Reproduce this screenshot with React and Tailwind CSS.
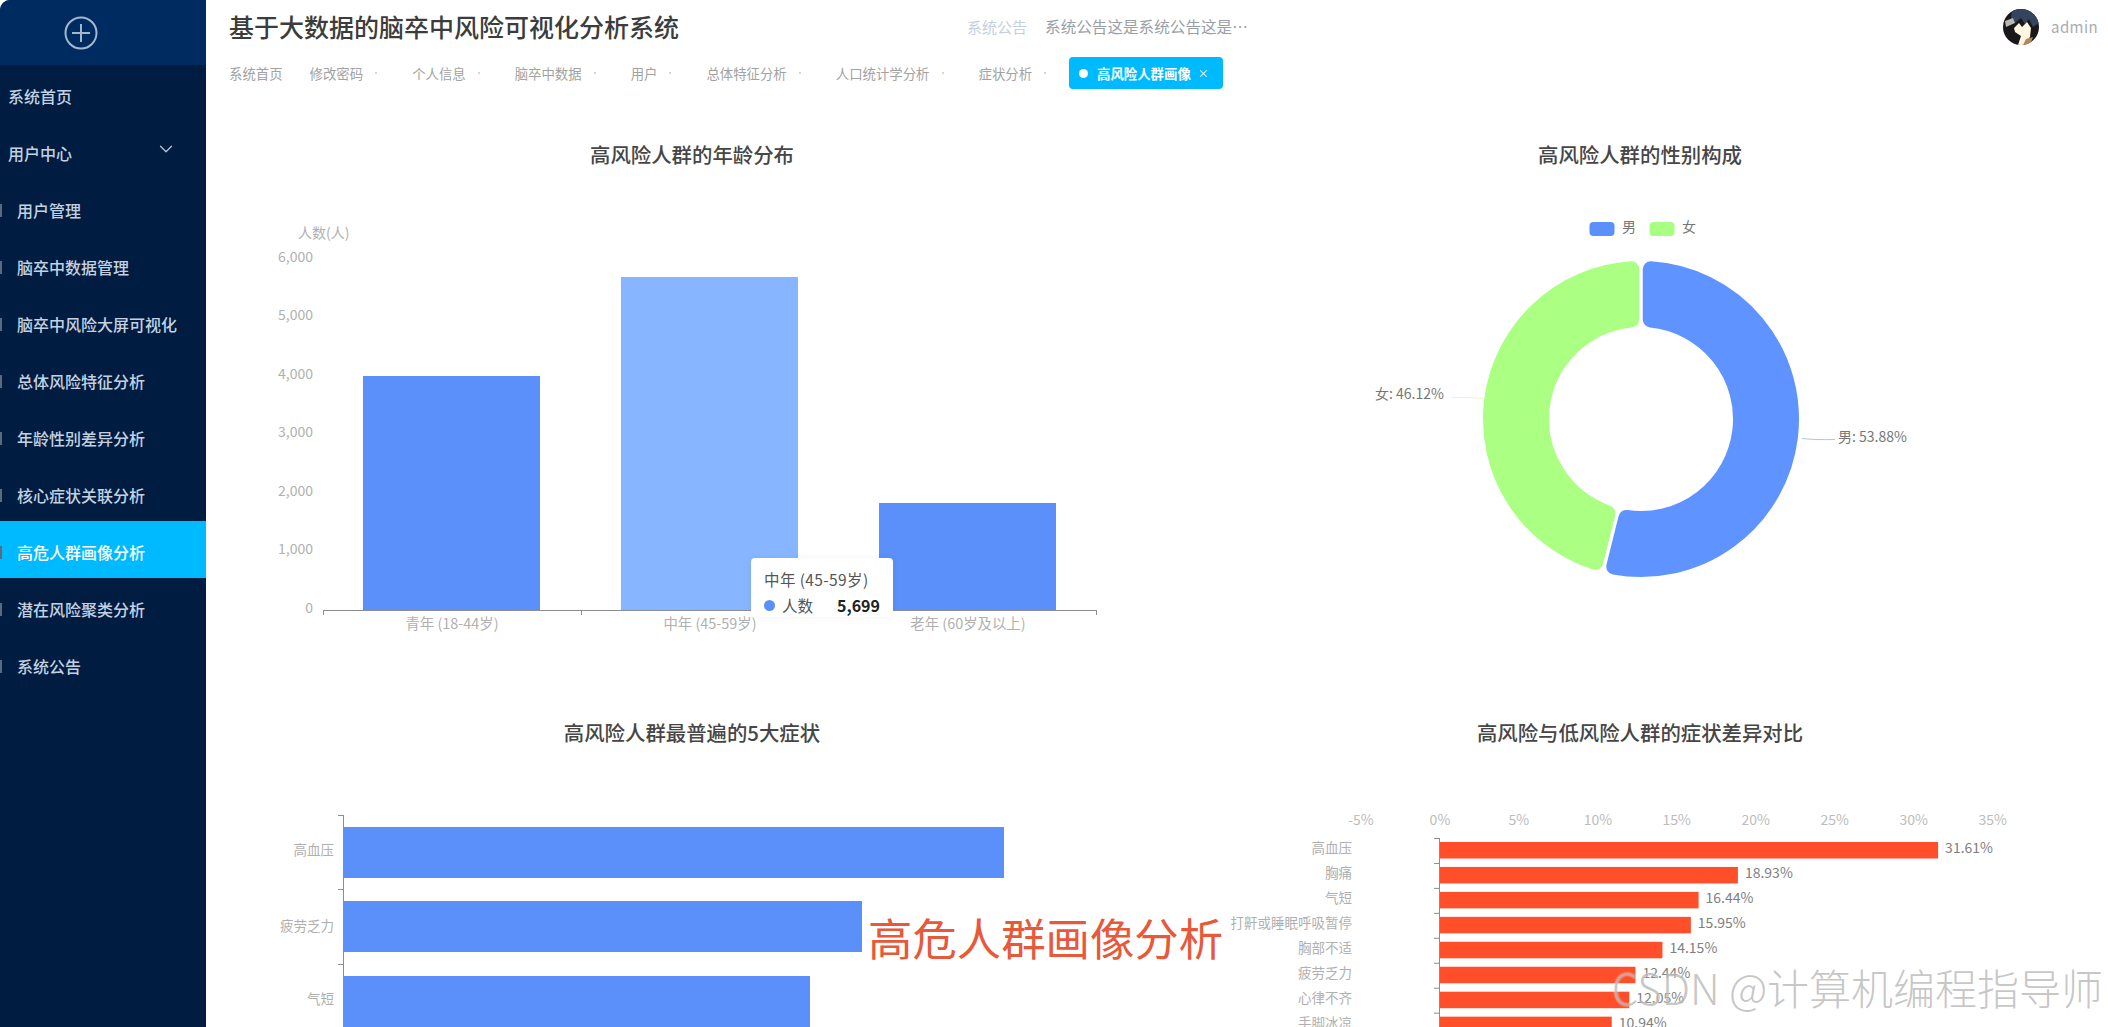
import { ChevronDown } from 'lucide-react'

const menu = [
  { label: '系统首页' },
  { label: '用户中心', arrow: true },
  { label: '用户管理', sub: true },
  { label: '脑卒中数据管理', sub: true },
  { label: '脑卒中风险大屏可视化', sub: true },
  { label: '总体风险特征分析', sub: true },
  { label: '年龄性别差异分析', sub: true },
  { label: '核心症状关联分析', sub: true },
  { label: '高危人群画像分析', sub: true, active: true },
  { label: '潜在风险聚类分析', sub: true },
  { label: '系统公告', sub: true },
]

const tabs = ['修改密码', '个人信息', '脑卒中数据', '用户', '总体特征分析', '人口统计学分析', '症状分析']

const ageBars = [
  { label: '青年 (18-44岁)', x: 363, top: 376, cx: 452, color: '#5b8ff9' },
  { label: '中年 (45-59岁)', x: 621, top: 277, cx: 710, color: '#87b5ff' },
  { label: '老年 (60岁及以上)', x: 879, top: 503, cx: 968, color: '#5b8ff9' },
]

const topSymptoms = [
  { label: '高血压', y: 827, right: 1004, ly: 851 },
  { label: '疲劳乏力', y: 901, right: 862, ly: 927 },
  { label: '气短', y: 976, right: 810, ly: 1000 },
]

const diffRows = [
  ['高血压', 31.61],
  ['胸痛', 18.93],
  ['气短', 16.44],
  ['打鼾或睡眠呼吸暂停', 15.95],
  ['胸部不适', 14.15],
  ['疲劳乏力', 12.44],
  ['心律不齐', 12.05],
  ['手脚冰凉', 10.94],
]

function polar(cx, cy, radius, deg) {
  const a = (deg * Math.PI) / 180
  return [cx + radius * Math.sin(a), cy - radius * Math.cos(a)]
}

// rounded donut slice: inset path + same colour round-join stroke
function slice(cx, cy, R, r, start, end, corner, gap) {
  const outer = R - corner
  const inner = r + corner
  const inset = gap / 2 + corner
  const da1 = ((inset / outer) * 180) / Math.PI
  const da2 = ((inset / inner) * 180) / Math.PI
  const large = end - start > 180 ? 1 : 0
  const p1 = polar(cx, cy, outer, start + da1)
  const p2 = polar(cx, cy, outer, end - da1)
  const p3 = polar(cx, cy, inner, end - da2)
  const p4 = polar(cx, cy, inner, start + da2)
  return `M${p1} A${outer} ${outer} 0 ${large} 1 ${p2} L${p3} A${inner} ${inner} 0 ${large} 0 ${p4} Z`
}

function Sidebar() {
  return (
    <aside className="w-[206px] h-full shrink-0 bg-[#001c40] rounded-tl-[10px] overflow-hidden">
      <div className="h-[65px] bg-[#002b60] flex items-center justify-center pr-[44px]">
        <svg width="34" height="34" viewBox="0 0 34 34" fill="none" stroke="#a3b8cf" strokeWidth="2">
          <circle cx="17" cy="17" r="15.5" />
          <path d="M8 17h18M17 8v18" />
        </svg>
      </div>
      {menu.map((item) => (
        <div
          key={item.label}
          className={`h-[57px] pt-[5px] flex items-center text-[16px] font-medium ${
            item.active ? 'bg-[#00baff] text-white font-bold' : 'text-[#c3d2e2]'
          } ${item.sub ? 'pl-0' : 'pl-[8px]'}`}
        >
          {item.sub && <span className="w-[2px] h-[13px] mr-[15px] bg-[#5a6a80]" />}
          <span>{item.label}</span>
          {item.arrow && <ChevronDown size={22} strokeWidth={1.4} className="ml-[83px] -mt-[8px] text-[#b4c6da]" />}
        </div>
      ))}
    </aside>
  )
}

function Header() {
  return (
    <div className="h-[54px] flex items-center pl-[23px] pr-[10px]">
      <h1 className="text-[25px] font-medium text-[#3c3c3c] whitespace-nowrap">基于大数据的脑卒中风险可视化分析系统</h1>
      <span className="ml-[288px] text-[15px] text-[#c3d0e0]">系统公告</span>
      <span className="ml-[18px] text-[15.6px] text-[#9a9ea6] whitespace-nowrap">系统公告这是系统公告这是⋯</span>
      <div className="ml-auto flex items-center gap-3">
        <svg width="36" height="36" viewBox="0 0 36 36">
          <defs>
            <clipPath id="avatar">
              <circle cx="18" cy="18" r="18" />
            </clipPath>
          </defs>
          <g clipPath="url(#avatar)">
            <rect width="36" height="36" fill="#1a171b" />
            <path d="M9 0 L32 0 L36 14 L30 18 L26 10 L22 15 L18 9 L12 14 L8 10 Z" fill="#34435f" />
            <path d="M2 12 L10 9 L12 14 L3 18 Z" fill="#b8b8b0" />
            <path d="M11 19 L16 14 L19 18 L24 13 L28 19 L27 28 L21 36 L15 36 L18 27 L12 23 Z" fill="#fff6e0" />
            <path d="M23 30 L30 28 L27 36 L20 36 Z" fill="#b98658" />
          </g>
        </svg>
        <span className="text-[15px] tracking-[0.4px] text-[#a8acb3]">admin</span>
      </div>
    </div>
  )
}

function Tabs() {
  return (
    <div className="mt-[3px] h-[32px] flex items-center pl-[23px] text-[13.4px] text-[#a2a2a2] whitespace-nowrap">
      <span className="mr-[27px]">系统首页</span>
      {tabs.map((tab) => (
        <span key={tab} className="flex items-center mr-[35px]">
          {tab}
          <span className="ml-3 w-[2px] h-[2px] rounded-full bg-[#c8c8c8]" />
        </span>
      ))}
      <div className="-ml-[12px] w-[154px] h-[32px] rounded-[4px] bg-[#00baff] flex items-center pl-[10px] text-white font-bold">
        <span className="w-[9px] h-[9px] rounded-full bg-white mr-[9px]" />
        高风险人群画像
        <span className="ml-[7px] text-[11px] font-normal">×</span>
      </div>
    </div>
  )
}

function AgeChart() {
  return (
    <svg className="block" width="944" height="534" viewBox="220 177 944 534">
      <g fontSize="14" fill="#b0b0b0">
        <text x="298" y="234" dominantBaseline="middle">人数(人)</text>
        {['0', '1,000', '2,000', '3,000', '4,000', '5,000', '6,000'].map((t, i) => (
          <text key={t} x="313" y={609 - i * 58.5} textAnchor="end" dominantBaseline="middle">{t}</text>
        ))}
        {ageBars.map((b) => (
          <g key={b.label}>
            <rect x={b.x} y={b.top} width="177" height={610 - b.top} fill={b.color} />
            <text x={b.cx} y="625" fontSize="14.4" textAnchor="middle" dominantBaseline="middle">{b.label}</text>
          </g>
        ))}
      </g>
      <path d="M323 610.5H1097M323.5 610v5M581.5 610v5M839.5 610v5M1096.5 610v5" stroke="#8a8d94" fill="none" />
    </svg>
  )
}

function GenderChart() {
  return (
    <svg className="block" width="944" height="534" viewBox="1164 177 944 534">
      <rect x="1589.5" y="222" width="25" height="14" rx="4" fill="#5b8ff9" />
      <rect x="1649.5" y="222" width="25" height="14" rx="4" fill="#a9ff82" />
      <path d={slice(1641, 419, 158, 92, 0, 194, 8, 3.5)} fill="#5f93ff" stroke="#5f93ff" strokeWidth="16" strokeLinejoin="round" />
      <path d={slice(1641, 419, 158, 92, 194, 360, 8, 3.5)} fill="#abff82" stroke="#abff82" strokeWidth="16" strokeLinejoin="round" />
      <path d="M1802 438.5Q1815 440 1835 439.5" stroke="#a9c4f5" fill="none" />
      <path d="M1452 397.5Q1470 397 1483 398.5" stroke="#eef3c8" fill="none" />
      <g fontSize="14" fill="#777" dominantBaseline="middle">
        <text x="1622" y="228">男</text>
        <text x="1682" y="228">女</text>
        <text x="1375" y="395">女: 46.12%</text>
        <text x="1838" y="438">男: 53.88%</text>
      </g>
    </svg>
  )
}

function SymptomChart() {
  return (
    <svg className="block" width="944" height="534" viewBox="220 755 944 534">
      <path d="M343.5 815V1100M338 815.5h5M338 889.5h5M338 964.5h5" stroke="#8a8d94" fill="none" />
      {topSymptoms.map((s) => (
        <g key={s.label}>
          <rect x="344" y={s.y} width={s.right - 344} height="51" fill="#5b8ff9" />
          <text x="334" y={s.ly} fontSize="13.5" fill="#b0b0b0" textAnchor="end" dominantBaseline="middle">{s.label}</text>
        </g>
      ))}
    </svg>
  )
}

function DiffChart() {
  return (
    <svg className="block" width="944" height="534" viewBox="1164 755 944 534">
      <g fontSize="14" fill="#bcbcbc" textAnchor="middle" dominantBaseline="middle">
        {['-5%', '0%', '5%', '10%', '15%', '20%', '25%', '30%', '35%'].map((t, i) => (
          <text key={t} x={1361 + i * 78.95} y="821">{t}</text>
        ))}
      </g>
      <path d="M1439.5 838V1030" stroke="#8a8d94" fill="none" />
      {diffRows.map(([name, value], i) => {
        const right = 1439 + value * 15.79
        return (
          <g key={name}>
            <path d={`M1434 ${838.5 + i * 24.95}h5`} stroke="#8a8d94" />
            <rect x="1440" y={842 + i * 24.95} width={right - 1440} height="16.5" fill="#ff4f2a" />
            <text x="1352" y={849.5 + i * 24.95} fontSize="13.5" fill="#b0b0b0" textAnchor="end" dominantBaseline="middle">{name}</text>
            <text x={right + 7} y={849.5 + i * 24.95} fontSize="14" fill="#808080" dominantBaseline="middle">{value.toFixed(2)}%</text>
          </g>
        )
      })}
    </svg>
  )
}

function ChartCard({ title, children }) {
  return (
    <section className="relative h-[578px]">
      <h2 className="h-[44px] pb-[2px] flex items-center justify-center text-[20.4px] font-medium text-[#464646]">{title}</h2>
      {children}
    </section>
  )
}

export default function App() {
  return (
    <div className="relative flex w-[2108px] h-[1027px] overflow-hidden bg-white font-['Noto_Sans_CJK_SC',sans-serif]">
      <Sidebar />
      <main className="flex-1 min-w-0">
        <Header />
        <Tabs />
        <div className="mt-[44px] pl-[14px] grid grid-cols-[944px_952px]">
          <ChartCard title="高风险人群的年龄分布">
            <AgeChart />
            {/* hover tooltip over the middle bar */}
            <div className="absolute left-[531px] top-[425px] w-[142px] h-[59px] bg-white rounded-[4px] pl-[13px] pt-[8px] shadow-[0_0_6px_rgba(0,0,0,0.06)]">
              <div className="text-[15.5px] leading-[26px] tracking-[0.4px] text-[#555]">中年 (45-59岁)</div>
              <div className="mt-[1px] flex items-center text-[15.5px] leading-[24px] text-[#555]">
                <span className="w-[11px] h-[11px] rounded-full bg-[#5b8ff9] mr-[7px]" />
                人数
                <span className="ml-[24px] text-[16px] font-bold text-[#222]">5,699</span>
              </div>
            </div>
          </ChartCard>
          <ChartCard title="高风险人群的性别构成">
            <GenderChart />
          </ChartCard>
          <ChartCard title="高风险人群最普遍的5大症状">
            <SymptomChart />
          </ChartCard>
          <ChartCard title="高风险与低风险人群的症状差异对比">
            <DiffChart />
          </ChartCard>
        </div>
      </main>

      {/* captions burned in on top of the screenshot */}
      <div className="absolute left-[868px] top-[910px] text-[44.4px] leading-[54px] text-[#e8583a] whitespace-nowrap">高危人群画像分析</div>
      <div className="absolute left-[1612px] top-[960px] text-[42px] leading-[54px] font-light text-[rgba(150,150,150,0.55)] whitespace-nowrap [text-shadow:0_0_2px_rgba(255,255,255,0.8)]">CSDN @计算机编程指导师</div>
    </div>
  )
}
